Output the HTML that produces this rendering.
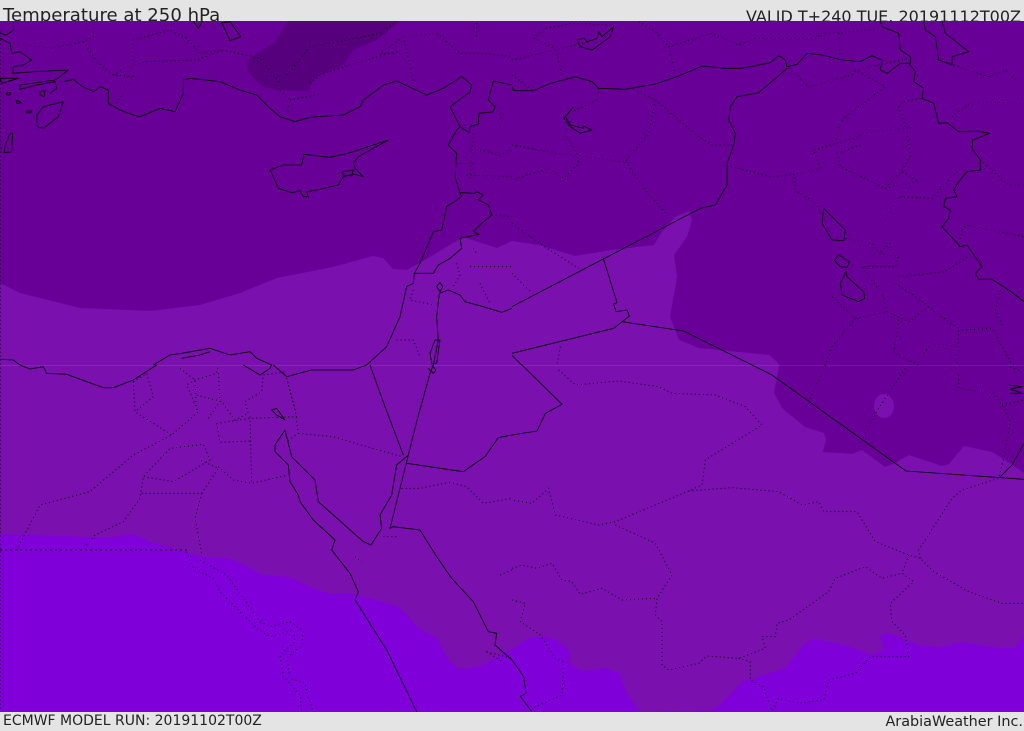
<!DOCTYPE html>
<html>
<head>
<meta charset="utf-8">
<style>
html,body{margin:0;padding:0;width:1024px;height:729px;overflow:hidden;background:#e4e4e4}
.t{position:absolute;font-family:"DejaVu Sans","Liberation Sans",sans-serif;color:#222;white-space:nowrap}
svg{position:absolute;left:0;top:21px}
.s polyline,.s polygon{fill:none;stroke:#000;stroke-width:2.6;stroke-linejoin:round}
.d polyline{fill:none;stroke:#000;stroke-width:3;stroke-dasharray:3 9;stroke-opacity:.95}
</style>
</head>
<body>
<div class="t" style="left:3px;top:5px;font-size:18.1px;line-height:22px">Temperature at 250 hPa</div>
<div class="t" style="right:3px;top:6px;font-size:16px;line-height:22px">VALID T+240 TUE. 20191112T00Z</div>
<div class="t" style="left:3px;top:713px;font-size:14px;line-height:17px">ECMWF MODEL RUN: 20191102T00Z</div>
<div class="t" style="right:1px;top:714px;font-size:14.4px;line-height:17px">ArabiaWeather Inc.</div>

<svg width="1024" height="691" viewBox="0 21 1024 691">
<rect x="0" y="21" width="1024" height="691" fill="#7f00d9"/>
<polygon fill="#7a11ae" points="0,534 30,535 90,537 113,537 133,534 150,542 187,552 203,557 227,558 240,563 263,575 290,577 310,587 330,594 353,594 383,602 397,606 407,615 417,627 437,638 447,658 457,668 467,669 483,665 512,649 529,638 545,636 562,643 569,652 570,663 582,671 605,668 619,673 627,693 640,712 712,710 722,703 742,682 785,668 805,643 815,639 845,645 872,655 884,650 880,635 889,633 919,645 939,647 962,642 999,648 1014,648 1024,637 1024,21 0,21"/>
<polygon fill="#680098" points="0,283 20,293 80,308 150,311 200,305 240,293 277,278 333,267 373,256 383,258 393,269 407,270 430,257 463,237 497,248 512,241 539,245 575,256 612,250 654,245 662,232 675,217 689,211 692,220 687,237 674,255 677,277 670,317 679,340 699,348 769,355 777,362 779,365 774,393 782,408 805,427 824,433 826,440 823,452 852,454 862,450 885,467 895,463 909,455 942,466 949,464 964,446 992,452 1005,460 1024,473 1024,21 0,21"/>
<ellipse cx="884" cy="406" rx="10" ry="12" fill="#7a11ae"/>
<polygon fill="#56007e" points="288,21 275,42 247,60 248,72 263,87 280,90 308,91 315,78 343,65 353,50 377,40 400,21"/>
<line x1="0" y1="365.5" x2="1024" y2="365.5" stroke="#fff" stroke-opacity=".09"/>

<!-- Quadrant 1 -->
<g transform="scale(.33333)">
<g class="d">
<polyline points="70,130 150,145 250,125 280,110 280,75"/>
<polyline points="250,125 290,185 340,225 400,230 350,310"/>
<polyline points="400,230 400,120 510,90 560,115 600,160 670,150 780,175 840,250"/>
<polyline points="340,225 370,205 440,185 590,180 670,150"/>
<polyline points="860,225 930,140 1040,120 1140,100 1190,65"/>
<polyline points="840,270 870,300 860,350"/>
<polyline points="870,300 950,285"/>
<polyline points="930,250 960,225 1050,195 1200,150 1180,160 1140,160 1210,110 1310,100 1380,160 1450,160 1536,170"/>
<polyline points="1210,110 1240,245"/>
<polyline points="1430,70 1430,110"/>
<polyline points="1500,340 1505,370"/>
<polyline points="1420,400 1410,540"/>
<polyline points="1440,450 1500,465 1536,450"/>
<polyline points="1370,490 1420,490"/>
<polyline points="1400,525 1536,530"/>
<polyline points="1475,645 1536,650"/>
<polyline points="1370,790 1380,825 1360,860"/>
<polyline points="1410,800 1536,800"/>
<polyline points="1440,850 1470,910"/>
<polyline points="1240,870 1230,900 1300,915"/>
<polyline points="1190,1020 1240,1020 1260,1070"/>
<polyline points="1420,745 1430,760"/>
</g>
<g class="s">
<polyline points="40,65 40,90 20,105 0,100"/>
<polyline points="0,115 30,130 35,160 60,155 95,180 70,195 40,200 38,220 100,215 205,210 165,240 60,255 60,268 110,255 165,245 170,265 150,280"/>
<polyline points="190,245 220,238 245,258 280,275 300,260 325,270 325,310 360,330 400,345 420,350 480,325 525,335 550,280 550,240 570,235 660,245 720,270 770,285 810,325 840,350 885,365 930,352 1030,345 1080,320 1090,300 1150,255 1190,243 1280,285 1330,265 1385,230 1415,255 1410,275 1350,320 1380,380 1370,390 1345,435 1370,460 1365,530 1380,578 1385,590 1340,620 1325,690 1300,695 1260,790 1243,820 1240,850 1220,860 1200,950 1160,1040 1100,1095"/>
<polygon points="110,345 130,320 190,305 175,350 130,385 112,380"/>
<polygon points="15,440 30,400 38,400 35,455 12,458"/>
<polygon points="810,510 850,495 905,495 912,463 990,472 1050,458 1165,420 1075,470 1060,490 1065,505 1090,530 1060,522 1030,530 1015,555 950,570 920,575 925,590 910,590 900,572 875,578 835,565 820,530"/>
<polyline points="1025,515 1060,510 1055,528 1030,525 1025,515"/>
<polygon points="0,235 55,235 5,250"/>
<polygon points="20,278 32,278 30,285 20,285"/>
<polygon points="48,300 65,308 50,310"/>
<polygon points="80,333 95,333 90,338 80,338"/>
<polygon points="120,275 135,272 132,290 120,285"/>
<polygon points="665,68 690,65 722,110 690,122 680,100"/>
<polyline points="580,63 595,85 608,63"/>
<polyline points="1480,243 1536,255"/>
<polyline points="1480,243 1465,300 1485,320 1480,335 1437,340 1435,372 1410,380 1408,398 1380,380"/>
<polyline points="1243,820 1300,820 1315,795 1350,775 1385,745 1380,715 1437,703 1420,695 1445,670 1475,645 1465,615 1435,600 1450,585 1430,575 1425,580 1380,578"/>
<polyline points="1318,880 1345,870 1380,885 1395,905 1450,920 1505,937 1536,925"/>
<polyline points="1318,880 1310,950 1315,1020 1300,1095"/>
<polygon points="1290,1060 1305,1020 1320,1020 1310,1090 1295,1090"/>
<polygon points="1310,860 1320,847 1328,860 1320,875"/>
<polyline points="460,1095 510,1065 545,1060 630,1045 690,1065 750,1055 770,1075 815,1095"/>
<polyline points="545,1075 600,1065 630,1055"/>
<polyline points="0,1078 40,1080 60,1095"/>
</g>
</g>

<!-- Quadrant 2 -->
<g transform="translate(512,0) scale(.33333)">
<g class="d">
<polyline points="65,115 100,85 180,70 300,75"/>
<polyline points="65,115 130,145"/>
<polyline points="0,180 130,150 230,125"/>
<polyline points="135,160 150,230"/>
<polyline points="470,140 490,220"/>
<polyline points="470,140 600,100 680,135 730,115 910,115 930,100 1090,90"/>
<polyline points="380,65 430,95 470,140"/>
<polyline points="980,100 985,165"/>
<polyline points="260,265 255,300 190,330 160,400 195,460"/>
<polyline points="0,225 60,270"/>
<polyline points="0,435 30,440 120,458 340,485 410,400 430,300 370,270"/>
<polyline points="430,300 560,410 600,435 665,435"/>
<polyline points="195,460 200,490 155,535 110,505 0,540"/>
<polyline points="340,485 400,570 470,650"/>
<polyline points="645,495 770,530 840,525 925,505 905,450 1040,410 1050,400 1220,380"/>
<polyline points="845,520 850,570 910,610 930,640"/>
<polyline points="975,460 1045,435"/>
<polyline points="975,460 985,500 1120,565 1170,510 1195,470 1185,390"/>
<polyline points="1120,565 1220,545 1170,515"/>
<polyline points="1000,350 1120,260 1030,210 1190,175"/>
<polyline points="975,420 980,375 1000,350"/>
<polyline points="830,205 890,260 1020,225 1030,210"/>
<polyline points="1160,320 1170,305 1230,295"/>
<polyline points="1160,320 1180,380"/>
<polyline points="1320,350 1380,305 1536,310"/>
<polyline points="1280,180 1430,230 1480,210 1510,240"/>
<polyline points="1405,480 1490,555 1536,555"/>
<polyline points="1260,595 1340,510"/>
<polyline points="1120,660 1160,590 1260,595"/>
<polyline points="1135,730 1100,760 1160,770 1150,800 1050,800 1100,870"/>
<polyline points="1160,830 1300,815 1380,760"/>
<polyline points="1000,715 1080,730 1100,760"/>
<polyline points="1150,850 1240,910 1260,930 1340,985 1335,1095"/>
<polyline points="960,890 1030,955 1125,935 1110,880"/>
<polyline points="1030,955 960,1040 940,1095"/>
<polyline points="1125,935 1190,965 1250,920"/>
<polyline points="1160,960 1145,1060 1220,1095"/>
<polyline points="1350,690 1360,675 1536,710"/>
<polyline points="1350,990 1440,985 1500,1095"/>
<polyline points="1235,1060 1260,1030 1340,1040"/>
<polyline points="1465,870 1450,930 1475,985"/>
<polyline points="1350,690 1340,740"/>
<polyline points="0,670 90,735 200,805"/>
<polyline points="0,820 60,880"/>
<polyline points="145,1040 135,1095"/>
</g>
<g class="s">
<polyline points="0,260 5,272 65,272 110,252 190,230 240,245 260,265 340,268 430,252 500,228 570,198 640,205 690,205 775,188 800,167 820,180 825,200 855,193 885,160 930,165 990,180 1045,185 1080,167 1110,180 1105,210 1125,220 1165,190 1195,190 1195,170 1165,150 1160,100 1110,80 1105,63"/>
<polyline points="1190,190 1210,215 1205,245 1235,265 1230,295 1265,310 1280,370 1305,368 1340,395 1395,393 1432,400 1382,420 1380,445 1405,480 1405,510 1365,515 1340,545 1325,570 1335,590 1300,595 1295,620 1315,630 1310,655 1290,680 1345,740 1365,735 1410,800 1390,820 1400,838 1440,838 1490,870 1536,905"/>
<polyline points="825,205 740,278 675,290 655,320 650,360 670,400 665,435 645,490 645,555 610,615 565,625 0,920"/>
<polyline points="273,772 315,908 305,912 312,935 345,930 352,948 305,985 0,1060"/>
<polyline points="0,1066 30,1096"/>
<polyline points="330,965 515,993 720,1095"/>
<polyline points="1290,65 1300,100 1370,155 1320,170 1320,195 1280,180 1270,110 1240,90 1235,65" stroke-width="1.6"/>
<polyline points="195,120 215,115 225,125 255,115 260,95 270,110 305,80 295,110 240,150 205,140 195,120"/>
<polyline points="185,320 160,350 175,375 215,385 215,378 240,390 205,400 175,380 155,355 185,320"/>
<polygon points="935,625 960,650 1000,690 995,722 960,720 930,670"/>
<polygon points="980,765 1012,785 1005,802 985,800 968,782"/>
<polygon points="1003,815 1005,830 1055,875 1058,895 1040,905 990,885 985,850"/>
</g>
</g>

<!-- Quadrant 3 -->
<g transform="translate(0,365) scale(.33333)">
<g class="d">
<polyline points="1,-1000 1,1040"/>
<polyline points="0,555 560,555" style="stroke-dasharray:6 9"/>
<polyline points="50,555 120,420 270,380 400,270 515,210 595,140 560,60 585,45 650,25 655,0"/>
<polyline points="400,50 405,140 515,210"/>
<polyline points="400,50 440,25 460,95 405,140"/>
<polyline points="540,10 585,45 590,140"/>
<polyline points="590,90 665,110 705,165 745,145 735,110 785,80 790,30 860,20"/>
<polyline points="625,160 660,110 655,20"/>
<polyline points="650,175 660,232 755,228"/>
<polyline points="750,155 755,355"/>
<polyline points="650,175 750,160 890,155 860,40 885,130 895,205 860,230"/>
<polyline points="655,305 700,345 755,355 865,330"/>
<polyline points="260,540 285,510 370,470 420,400 430,335 510,250 610,238 630,285 520,350 430,335"/>
<polyline points="425,385 605,385 655,310 600,285"/>
<polyline points="605,385 585,460 605,565"/>
<polyline points="560,560 580,610 640,640 660,680 770,790 810,815 880,795 885,830 840,870 850,935 900,990 905,1040"/>
<polyline points="600,585 680,630 780,770 810,785 870,770 910,800 905,840 860,880 870,940 915,955 925,1000 940,1040"/>
<polyline points="895,205 1000,215 1100,245 1205,275"/>
<polyline points="1205,370 1260,370 1350,352 1400,365 1450,415 1536,400"/>
<polyline points="1150,515 1190,515"/>
<polyline points="1065,575 1085,590"/>
<polyline points="1500,630 1536,615"/>
<polyline points="1460,860 1520,900"/>
<polyline points="1460,860 1536,880"/>
</g>
<g class="s">
<polyline points="60,0 90,12 130,5 140,25 200,28 310,68 340,68 400,45 470,0"/>
<polyline points="820,0 860,35 935,15 1000,15 1060,15 1100,0"/>
<polyline points="730,0 780,30 810,10 815,0"/>
<polyline points="855,195 875,275 945,345 955,410 1000,450 1090,530 1113,540 1145,490 1140,450 1175,390 1190,300 1225,270 1170,490 1180,485 1260,495 1310,575 1355,640 1420,710 1465,800 1490,805 1485,840 1536,885"/>
<polyline points="855,195 825,240 825,260 865,300 870,350 895,390 900,410 940,465 1005,525 995,555 1050,625 1075,680 1065,705 1160,855 1250,1040"/>
<polyline points="1110,0 1155,125 1210,270"/>
<polyline points="1300,0 1290,25 1250,170 1225,270"/>
<polyline points="1285,10 1300,25 1308,15 1295,0"/>
<polygon points="815,135 830,130 855,165 830,150"/>
<polyline points="1220,295 1390,320 1455,275 1495,218 1536,210"/>
</g>
</g>

<!-- Quadrant 4 -->
<g transform="translate(512,365) scale(.33333)">
<g class="d">
<polyline points="140,15 190,60 320,48 440,65 480,85 610,90 700,125 750,180 580,285 570,360 530,378 310,470 260,480 130,450 110,370 60,415 0,405"/>
<polyline points="530,378 660,368 800,380 870,420 920,410 935,440 1035,440 1090,530 1190,570 1225,580 1265,620 1370,680 1470,715 1536,715"/>
<polyline points="310,480 430,535 480,630 435,700 430,750 450,770 450,900 470,915 560,895 585,873 680,880 760,850 750,815 790,815 795,775 830,765 950,680 970,640 1060,605 1110,640 1170,625 1205,650 1135,715 1140,770 1180,810 1190,875 1075,875 1030,925 950,945 935,1005 860,1015 800,1000 780,1040"/>
<polyline points="0,610 30,600 75,610 120,595 150,645 180,650 205,688 270,670 330,705 430,700"/>
<polyline points="0,705 40,715 25,770 85,810 130,880 155,890 150,990 60,1030"/>
<polyline points="680,880 715,890 715,945 755,965 780,1040"/>
<polyline points="1190,570 1170,625"/>
<polyline points="1225,580 1220,555 1320,400 1350,375 1460,340 1475,280 1495,170 1470,120 1445,85 1340,70 1340,30"/>
<polyline points="1470,120 1536,105"/>
<polyline points="940,0 890,110"/>
<polyline points="1180,10 1100,130 1050,225"/>
<polyline points="1495,5 1536,25"/>
</g>
<g class="s">
<polyline points="30,0 150,118 100,145 75,198 0,210"/>
<polyline points="720,0 780,30 1182,318 1536,343"/>
<polyline points="1465,335 1500,300 1536,235"/>
<polyline points="0,885 35,935 42,985 25,995 60,1040"/>
<polyline points="1490,60 1530,65 1495,72 1530,85 1490,85"/>
</g>
</g>
</svg>
</body>
</html>
